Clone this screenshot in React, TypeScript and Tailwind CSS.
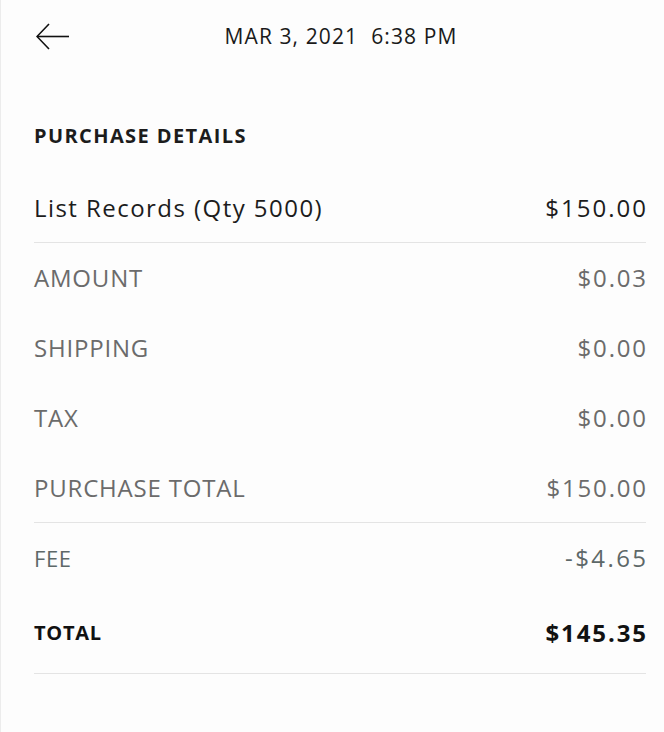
import React from "react";

const font = { fontFamily: '"Open Sans", "Noto Sans", sans-serif' };

function Row({
  label,
  value,
  h,
  border,
  labelCls,
  valueCls,
}: {
  label: string;
  value: string;
  h: string;
  border?: boolean;
  labelCls: string;
  valueCls: string;
}) {
  return (
    <div className={`flex items-center justify-between ${h} ${border ? "border-b border-[#e4e4e4]" : ""}`}>
      <span className={labelCls}>{label}</span>
      <span className={valueCls}>{value}</span>
    </div>
  );
}

export default function App() {
  const gray = "text-[24px] tracking-[0.8px] text-[#6b6b6b]";
  const grayVal = "text-[24px] tracking-[1.8px] text-[#6b6b6b] -mr-[1.8px]";
  return (
    <div className="w-[664px] h-[732px] bg-[#fdfdfd] border-l border-[#ececec]" style={font}>
      <div className="flex items-center h-[74px] pl-[35px] pr-[18px]">
        <svg width="34" height="28" viewBox="0 0 34 28" fill="none" stroke="#111" strokeWidth="1.6" className="shrink-0">
          <path d="M1 13.5 H33" />
          <path d="M13 1 L1 13.5 L13 26" />
        </svg>
        <div className="flex-1 text-center pr-[34px] text-[21px] tracking-[1.1px] text-[#1a1a1a]">MAR 3, 2021&nbsp;&nbsp;6:38 PM</div>
      </div>
      <div className="pl-[33px] pr-[18px]">
        <div className="h-[100px] flex items-center text-[20px] tracking-[1.4px] font-bold text-[#1c1c1c] pt-[24px]">PURCHASE DETAILS</div>
        <Row label="List Records (Qty 5000)" value="$150.00" h="h-[69px]" border labelCls="text-[24px] tracking-[1.45px] text-[#1c1c1c]" valueCls="text-[24px] tracking-[2px] -mr-[2px] text-[#1c1c1c]" />
        <Row label="AMOUNT" value="$0.03" h="h-[70px]" labelCls={gray} valueCls={grayVal} />
        <Row label="SHIPPING" value="$0.00" h="h-[70px]" labelCls={gray} valueCls={grayVal} />
        <Row label="TAX" value="$0.00" h="h-[70px]" labelCls={gray} valueCls={grayVal} />
        <Row label="PURCHASE TOTAL" value="$150.00" h="h-[70px]" border labelCls={gray} valueCls={grayVal} />
        <Row label="FEE" value="-$4.65" h="h-[70px]" labelCls="text-[22px] tracking-[0.6px] text-[#5d6868]" valueCls="text-[24px] tracking-[2.4px] -mr-[2.4px] text-[#5d6868]" />
        <Row label="TOTAL" value="$145.35" h="h-[81px]" border labelCls="text-[20px] tracking-[0.7px] font-bold text-[#111]" valueCls="text-[24px] tracking-[1.9px] -mr-[1.9px] font-bold text-[#111]" />
      </div>
    </div>
  );
}
